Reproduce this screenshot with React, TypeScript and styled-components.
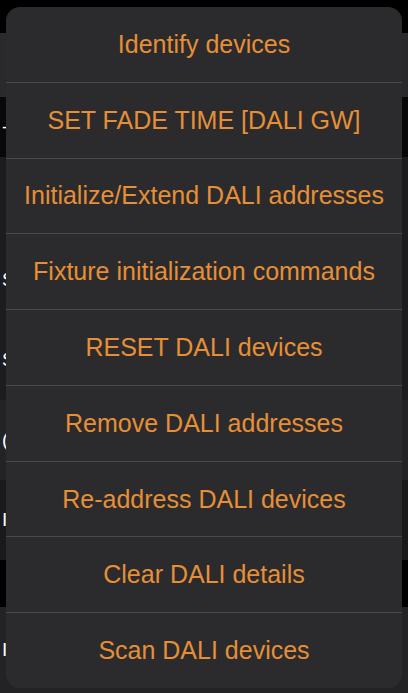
import React from 'react';
import styled, { createGlobalStyle } from 'styled-components';

const GlobalStyle = createGlobalStyle`
  html, body {
    margin: 0;
    padding: 0;
    background: #000;
  }
  body {
    font-family: "Liberation Sans", Arial, sans-serif;
  }
`;

const Screen = styled.div`
  position: relative;
  width: 408px;
  height: 693px;
  overflow: hidden;
  background: #000;
`;

const Backdrop = styled.div`
  display: flex;
  flex-direction: column;
  height: 100%;
`;

const BgRow = styled.div<{ $h: number; $tone: string }>`
  display: flex;
  align-items: center;
  height: ${(p) => p.$h}px;
  flex: ${(p) => (p.$h === 0 ? 1 : 'none')};
  background: ${(p) => p.$tone};
  padding-left: 2px;
  color: #fff;
  font-size: 19px;
`;

const Sheet = styled.div`
  position: absolute;
  top: 7px;
  left: 6px;
  width: 396px;
  height: 681px;
  border-radius: 14px;
  background: #2b2b2d;
  overflow: hidden;
  display: flex;
  flex-direction: column;
`;

const Action = styled.button`
  flex: 1;
  display: flex;
  align-items: center;
  justify-content: center;
  border: none;
  border-top: 1px solid #4a4a4c;
  background: transparent;
  color: #e68f37;
  font-family: "Liberation Sans", Arial, sans-serif;
  font-size: 25px;
  padding: 0;
  margin: 0;

  &:first-child {
    border-top: none;
  }
`;

const bands = [
  { h: 33, tone: '#000', glyph: '' },
  { h: 64, tone: '#2a2a2c', glyph: '' },
  { h: 60, tone: '#080808', glyph: '-' },
  { h: 83, tone: '#1c1c1e', glyph: '' },
  { h: 80, tone: '#1c1c1e', glyph: 'S' },
  { h: 80, tone: '#1c1c1e', glyph: 'S' },
  { h: 80, tone: '#232325', glyph: '(' },
  { h: 80, tone: '#1a1a1a', glyph: 'I' },
  { h: 47, tone: '#000', glyph: '' },
  { h: 0, tone: '#232325', glyph: 'I' },
];

const actions = [
  'Identify devices',
  'SET FADE TIME [DALI GW]',
  'Initialize/Extend DALI addresses',
  'Fixture initialization commands',
  'RESET DALI devices',
  'Remove DALI addresses',
  'Re-address DALI devices',
  'Clear DALI details',
  'Scan DALI devices',
];

const App = () => {
  return (
    <>
      <GlobalStyle />
      <Screen>
        <Backdrop>
          {bands.map((b, i) => (
            <BgRow key={i} $h={b.h} $tone={b.tone}>
              {b.glyph}
            </BgRow>
          ))}
        </Backdrop>
        <Sheet>
          {actions.map((label) => (
            <Action key={label}>{label}</Action>
          ))}
        </Sheet>
      </Screen>
    </>
  );
};

export default App;
